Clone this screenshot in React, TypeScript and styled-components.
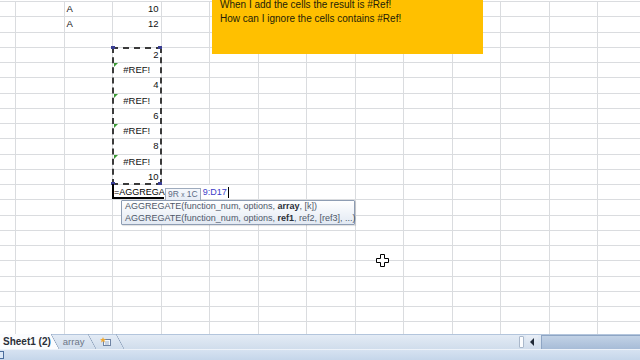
import styled, { createGlobalStyle } from "styled-components";

const Global = createGlobalStyle`
  html, body {
    margin: 0;
    padding: 0;
  }
  body {
    width: 640px;
    height: 360px;
    overflow: hidden;
    background: #fff;
    font-family: "Liberation Sans", Arial, sans-serif;
  }
`;

const Window = styled.div`
  width: 640px;
  height: 360px;
  display: flex;
  flex-direction: column;
  overflow: hidden;
`;

const Sheet = styled.div`
  position: relative;
  height: 334px;
  flex: none;
  overflow: hidden;
  padding-top: 1px;
  box-sizing: border-box;
  background: #fff;
`;

const Row = styled.div`
  display: grid;
  grid-template-columns: 15px repeat(13, 48.5px);
  height: 15.25px;
  box-sizing: border-box;
  border-top: 1px solid #dadcdf;
`;

const Cell = styled.div<{ $align?: "left" | "right" | "center"; $error?: boolean }>`
  position: relative;
  border-left: 1px solid #dadcdf;
  padding: 0 2px;
  font-size: 9.5px;
  line-height: 14.5px;
  color: #111;
  white-space: nowrap;
  text-align: ${(p) => p.$align ?? "left"};

  &:first-child {
    border-left: 0;
  }

  ${(p) =>
    p.$error &&
    `
    &::before {
      content: "";
      position: absolute;
      left: 1px;
      top: 0;
      border-top: 4px solid #3a9a34;
      border-right: 4px solid transparent;
    }
  `}
`;

const EditCell = styled(Cell)`
  overflow: visible;
  z-index: 3;
  padding-left: 1px;

  &::after {
    content: "";
    position: absolute;
    left: -1px;
    top: -1px;
    width: 52px;
    height: 15px;
    border-left: 2px solid #000;
    border-bottom: 2px solid #000;
    box-sizing: border-box;
  }
`;

const Formula = styled.span`
  position: relative;
  display: inline-flex;
  align-items: center;
  height: 14px;
  background: #fff;
  color: #000;
  font-size: 9px;
`;

const RefText = styled.span`
  margin-left: 2px;
  color: #3d3dc8;
`;

const Caret = styled.span`
  display: inline-block;
  width: 1px;
  height: 11px;
  margin-left: 1px;
  background: #000;
`;

const SizeTip = styled.span`
  display: inline-block;
  width: 36px;
  height: 13px;
  margin: 3px 0 0 0;
  box-sizing: border-box;
  border: 1px solid #9eabbd;
  background: linear-gradient(#f6f8fc, #e6ecf5);
  color: #5b6b84;
  font-size: 8.5px;
  line-height: 11px;
  text-align: center;
  align-self: flex-start;

  small {
    font-size: 6.5px;
  }
`;

const Note = styled.div`
  position: absolute;
  left: 212px;
  top: -2px;
  width: 271px;
  height: 56px;
  padding: 0 8px;
  box-sizing: border-box;
  background: #ffc000;
  color: #231d08;
  font-size: 10px;
  line-height: 13.5px;
  z-index: 1;
`;

const Ants = styled.div`
  position: absolute;
  left: 112px;
  top: 47px;
  width: 50px;
  height: 138px;
  box-sizing: border-box;
  border: 2px dashed #3a3a3a;
  z-index: 1;
`;

const Handle = styled.span<{ $x: number; $y: number }>`
  position: absolute;
  left: ${(p) => p.$x}px;
  top: ${(p) => p.$y}px;
  width: 4px;
  height: 3px;
  background: #3a3f94;
  z-index: 2;
`;

const FuncTip = styled.div`
  position: absolute;
  left: 121px;
  top: 200px;
  width: 234px;
  height: 25px;
  padding: 0 3px;
  box-sizing: border-box;
  border: 1px solid #8e9db3;
  border-radius: 1px;
  background: linear-gradient(#ffffff, #e2e9f3);
  box-shadow: 1px 1px 1px rgba(0, 0, 0, 0.12);
  color: #4e5869;
  font-size: 9px;
  line-height: 11.5px;
  white-space: nowrap;
  z-index: 3;

  b {
    color: #2b2f38;
  }
`;

const Cursor = styled.svg`
  position: absolute;
  left: 376px;
  top: 254px;
  z-index: 4;
`;

const TabBar = styled.div`
  display: flex;
  align-items: stretch;
  height: 15px;
  flex: none;
  box-sizing: border-box;
  border-top: 1px solid #b3c5dc;
  background: linear-gradient(#e3ebf5, #d0ddec);
`;

const Tabs = styled.div`
  display: flex;
  align-items: stretch;
  width: 518px;
  flex: none;
`;

const Tab = styled.div<{ $active?: boolean }>`
  display: flex;
  align-items: center;
  padding: ${(p) => (p.$active ? "0 0 0 3px" : "0 4px")};
  margin-top: -1px;
  font-size: ${(p) => (p.$active ? "10px" : "9.5px")};
  font-weight: ${(p) => (p.$active ? 700 : 400)};
  color: ${(p) => (p.$active ? "#2a2f38" : "#6d7687")};
  background: ${(p) => (p.$active ? "#fbfcfe" : "transparent")};
  white-space: nowrap;
`;

const Slant = styled.span<{ $active?: boolean }>`
  width: 8px;
  margin-top: -1px;
  background: linear-gradient(
    to top right,
    ${(p) => (p.$active ? "#fbfcfe" : "transparent")} calc(50% - 0.6px),
    #8b9fba 50%,
    transparent calc(50% + 0.6px)
  );
`;

const Splitter = styled.span`
  width: 3px;
  margin: 1px 2px 1px 1px;
  background: #fbfcfe;
  border: 1px solid #aab8cb;
  border-radius: 1px;
`;

const ArrowBtn = styled.span`
  display: flex;
  align-items: center;
  justify-content: center;
  width: 12px;
  background: linear-gradient(#e9eff7, #cfdbeb);

  &::before {
    content: "";
    border-right: 4px solid #1f2836;
    border-top: 4px solid transparent;
    border-bottom: 4px solid transparent;
  }
`;

const Thumb = styled.span`
  flex: 1;
  margin-left: 3px;
  border-top: 1px solid #8ea5c4;
  border-left: 1px solid #8ea5c4;
  background: linear-gradient(#c2d2e6, #a7bcd7);
`;

const StatusBar = styled.div`
  flex: 1;
  display: flex;
  align-items: center;
  border-top: 1px solid #edf2f9;
  background: linear-gradient(#d6e2f1, #c5d6ea);
`;

const StatusIcon = styled.span`
  width: 3px;
  height: 6px;
  border: 1px solid #4a6d9c;
  border-left: 0;
  background: #dce8f6;
`;

type C = { text?: string; align?: "left" | "right" | "center"; error?: boolean };

const data: Record<number, Record<number, C>> = {
  0: { 2: { text: "A" }, 3: { text: "10", align: "right" } },
  1: { 2: { text: "A" }, 3: { text: "12", align: "right" } },
  3: { 3: { text: "2", align: "right" } },
  4: { 3: { text: "#REF!", align: "center", error: true } },
  5: { 3: { text: "4", align: "right" } },
  6: { 3: { text: "#REF!", align: "center", error: true } },
  7: { 3: { text: "6", align: "right" } },
  8: { 3: { text: "#REF!", align: "center", error: true } },
  9: { 3: { text: "8", align: "right" } },
  10: { 3: { text: "#REF!", align: "center", error: true } },
  11: { 3: { text: "10", align: "right" } },
};

const ROWS = 22;
const COLS = 14;

function InsertSheetIcon() {
  return (
    <svg width="12" height="10" viewBox="0 0 12 10">
      <rect x="3.5" y="2.5" width="7" height="6" fill="#f4f7fb" stroke="#6f84a3" />
      <line x1="5" y1="5" x2="9" y2="5" stroke="#9bb0cc" />
      <line x1="5" y1="7" x2="9" y2="7" stroke="#9bb0cc" />
      <path d="M3 0 L3.8 2 L6 2.2 L4.3 3.5 L5 5.5 L3 4.3 L1 5.5 L1.7 3.5 L0 2.2 L2.2 2 Z" fill="#f0a830" />
    </svg>
  );
}

export default function App() {
  return (
    <Window>
      <Global />
      <Sheet>
        {Array.from({ length: ROWS }, (_, r) => (
          <Row key={r}>
            {Array.from({ length: COLS }, (_, c) => {
              if (r === 12 && c === 3) {
                return (
                  <EditCell key={c}>
                    <Formula>
                      =AGGREGA
                      <SizeTip>
                        9R <small>x</small> 1C
                      </SizeTip>
                      <RefText>9:D17</RefText>
                      <Caret />
                    </Formula>
                  </EditCell>
                );
              }
              const cell = data[r]?.[c];
              return (
                <Cell key={c} $align={cell?.align} $error={cell?.error}>
                  {cell?.text}
                </Cell>
              );
            })}
          </Row>
        ))}

        <Note>
          When I add the cells the result is #Ref!
          <br />
          How can I ignore the cells contains #Ref!
        </Note>

        <Ants />
        <Handle $x={111} $y={46} />
        <Handle $x={158} $y={46} />
        <Handle $x={158} $y={182} />
        <Handle $x={111} $y={182} />

        <FuncTip>
          AGGREGATE(function_num, options, <b>array</b>, [k])
          <br />
          AGGREGATE(function_num, options, <b>ref1</b>, ref2, [ref3], ...)
        </FuncTip>

        <Cursor width="13" height="13" viewBox="0 0 13 13">
          <path
            d="M4.5 0.5 H8.5 V4.5 H12.5 V8.5 H8.5 V12.5 H4.5 V8.5 H0.5 V4.5 H4.5 Z"
            fill="#fff"
            stroke="#000"
          />
        </Cursor>
      </Sheet>

      <TabBar>
        <Tabs>
          <Tab $active>Sheet1 (2)</Tab>
          <Slant $active />
          <Tab>array</Tab>
          <Slant />
          <Tab>
            <InsertSheetIcon />
          </Tab>
          <Slant />
        </Tabs>
        <Splitter />
        <ArrowBtn />
        <Thumb />
      </TabBar>

      <StatusBar>
        <StatusIcon />
      </StatusBar>
    </Window>
  );
}
